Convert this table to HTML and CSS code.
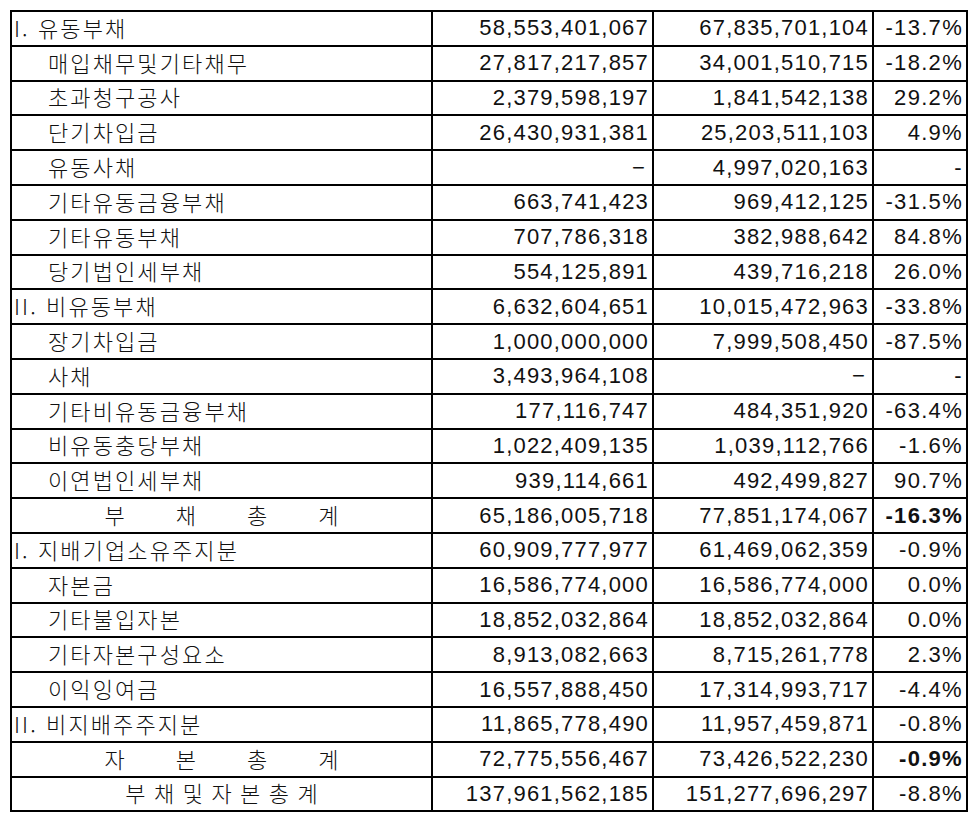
FILE: index.html
```html
<!DOCTYPE html>
<html lang="ko">
<head>
<meta charset="utf-8">
<link rel="stylesheet" href="styles.css">
</head>
<body>
<table class="fs">
  <colgroup>
    <col class="c-name"><col class="c-num"><col class="c-num2"><col class="c-pct">
  </colgroup>
  <tbody>
    <tr><td class="name top">I. 유동부채</td><td class="num">58,553,401,067</td><td class="num">67,835,701,104</td><td class="pct">-13.7%</td></tr>
    <tr><td class="name sub">매입채무및기타채무</td><td class="num">27,817,217,857</td><td class="num">34,001,510,715</td><td class="pct">-18.2%</td></tr>
    <tr><td class="name sub">초과청구공사</td><td class="num">2,379,598,197</td><td class="num">1,841,542,138</td><td class="pct">29.2%</td></tr>
    <tr><td class="name sub">단기차입금</td><td class="num">26,430,931,381</td><td class="num">25,203,511,103</td><td class="pct">4.9%</td></tr>
    <tr><td class="name sub">유동사채</td><td class="num dash">−</td><td class="num">4,997,020,163</td><td class="pct">-</td></tr>
    <tr><td class="name sub">기타유동금융부채</td><td class="num">663,741,423</td><td class="num">969,412,125</td><td class="pct">-31.5%</td></tr>
    <tr><td class="name sub">기타유동부채</td><td class="num">707,786,318</td><td class="num">382,988,642</td><td class="pct">84.8%</td></tr>
    <tr><td class="name sub">당기법인세부채</td><td class="num">554,125,891</td><td class="num">439,716,218</td><td class="pct">26.0%</td></tr>
    <tr><td class="name top">II. 비유동부채</td><td class="num">6,632,604,651</td><td class="num">10,015,472,963</td><td class="pct">-33.8%</td></tr>
    <tr><td class="name sub">장기차입금</td><td class="num">1,000,000,000</td><td class="num">7,999,508,450</td><td class="pct">-87.5%</td></tr>
    <tr><td class="name sub">사채</td><td class="num">3,493,964,108</td><td class="num dash">−</td><td class="pct">-</td></tr>
    <tr><td class="name sub">기타비유동금융부채</td><td class="num">177,116,747</td><td class="num">484,351,920</td><td class="pct">-63.4%</td></tr>
    <tr><td class="name sub">비유동충당부채</td><td class="num">1,022,409,135</td><td class="num">1,039,112,766</td><td class="pct">-1.6%</td></tr>
    <tr><td class="name sub">이연법인세부채</td><td class="num">939,114,661</td><td class="num">492,499,827</td><td class="pct">90.7%</td></tr>
    <tr><td class="name total"><span class="wide"><span>부</span><span>채</span><span>총</span><span>계</span></span></td><td class="num">65,186,005,718</td><td class="num">77,851,174,067</td><td class="pct bold">-16.3%</td></tr>
    <tr><td class="name top">I. 지배기업소유주지분</td><td class="num">60,909,777,977</td><td class="num">61,469,062,359</td><td class="pct">-0.9%</td></tr>
    <tr><td class="name sub">자본금</td><td class="num">16,586,774,000</td><td class="num">16,586,774,000</td><td class="pct">0.0%</td></tr>
    <tr><td class="name sub">기타불입자본</td><td class="num">18,852,032,864</td><td class="num">18,852,032,864</td><td class="pct">0.0%</td></tr>
    <tr><td class="name sub">기타자본구성요소</td><td class="num">8,913,082,663</td><td class="num">8,715,261,778</td><td class="pct">2.3%</td></tr>
    <tr><td class="name sub">이익잉여금</td><td class="num">16,557,888,450</td><td class="num">17,314,993,717</td><td class="pct">-4.4%</td></tr>
    <tr><td class="name top">II. 비지배주주지분</td><td class="num">11,865,778,490</td><td class="num">11,957,459,871</td><td class="pct">-0.8%</td></tr>
    <tr><td class="name total"><span class="wide"><span>자</span><span>본</span><span>총</span><span>계</span></span></td><td class="num">72,775,556,467</td><td class="num">73,426,522,230</td><td class="pct bold">-0.9%</td></tr>
    <tr><td class="name total"><span class="tight">부채및자본총계</span></td><td class="num">137,961,562,185</td><td class="num">151,277,696,297</td><td class="pct">-8.8%</td></tr>
  </tbody>
</table>
</body>
</html>
```

FILE: styles.css
```css
html, body {
  margin: 0;
  padding: 0;
  background: #fff;
}
body {
  padding: 10px 0 0 10px;
  font-family: "Liberation Sans", "Noto Sans CJK KR", sans-serif;
  color: #111;
}
.fs {
  border-collapse: collapse;
  table-layout: fixed;
  width: 956px;
  border: 2px solid #000;
}
.c-name { width: 421px; }
.c-num { width: 221px; }
.c-num2 { width: 220px; }
.c-pct { width: 94px; }
.fs td {
  border: 2px solid #000;
  height: 32.8px;
  padding: 0;
  white-space: nowrap;
  vertical-align: middle;
  line-height: 1;
}
.fs td.name {
  font-family: "Noto Sans CJK KR", "Liberation Sans", sans-serif;
  font-size: 22px;
  font-weight: 300;
  letter-spacing: 2.1px;
  height: 29.8px;
  padding-bottom: 3px;
}
.fs td.top { padding-left: 2px; }
.fs td.sub { padding-left: 36px; }
.fs td.total { text-align: center; }
.wide {
  display: inline-flex;
  justify-content: space-between;
  width: 234px;
  letter-spacing: 0;
}
.tight { letter-spacing: 8.5px; margin-right: -8.5px; }
.fs td.num {
  text-align: right;
  font-size: 22px;
  letter-spacing: 1.2px;
  padding-right: 3px;
}
.fs td.dash { padding-right: 6px; }
.fs td.pct {
  text-align: right;
  font-size: 22px;
  letter-spacing: 1.3px;
  padding-right: 3px;
}
.bold { font-weight: bold; }
```
